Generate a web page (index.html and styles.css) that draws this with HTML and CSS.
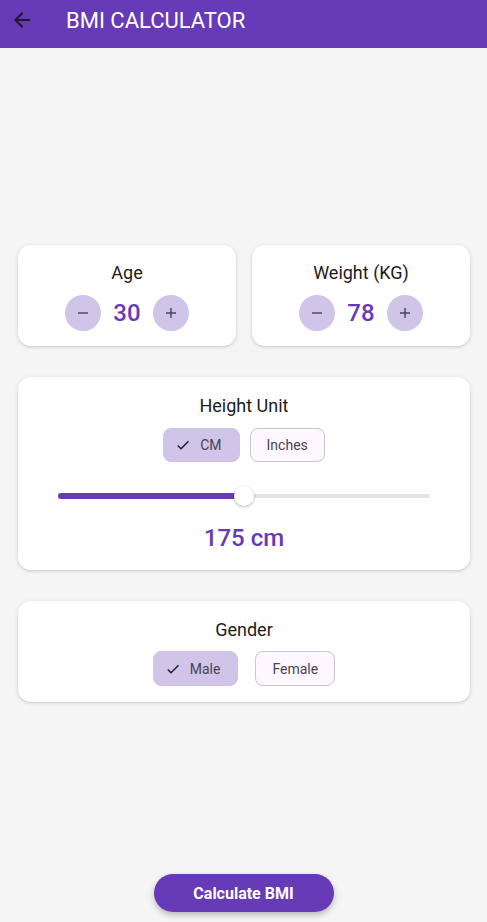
FILE: index.html
```html
<!DOCTYPE html>
<html>
<head>
<meta charset="utf-8">
<link rel="stylesheet" href="styles.css">
</head>
<body>
<div class="app">
  <header class="appbar">
    <svg class="back" width="24" height="24" viewBox="0 0 24 24"><path d="M20 11H7.83l5.59-5.59L12 4l-8 8 8 8 1.41-1.41L7.83 13H20v-2z" fill="#1d1b20"/></svg>
    <h1 class="title">BMI CALCULATOR</h1>
  </header>
  <main class="content">
    <div class="row">
      <section class="card small">
        <div class="label">Age</div>
        <div class="stepper">
          <button class="circle"><svg width="12" height="12" viewBox="0 0 12 12"><path d="M1 6h10" stroke="#4a4458" stroke-width="1.4"/></svg></button>
          <span class="num">30</span>
          <button class="circle"><svg width="12" height="12" viewBox="0 0 12 12"><path d="M1 6h10M6 1v10" stroke="#4a4458" stroke-width="1.4"/></svg></button>
        </div>
      </section>
      <section class="card small">
        <div class="label">Weight (KG)</div>
        <div class="stepper">
          <button class="circle"><svg width="12" height="12" viewBox="0 0 12 12"><path d="M1 6h10" stroke="#4a4458" stroke-width="1.4"/></svg></button>
          <span class="num">78</span>
          <button class="circle"><svg width="12" height="12" viewBox="0 0 12 12"><path d="M1 6h10M6 1v10" stroke="#4a4458" stroke-width="1.4"/></svg></button>
        </div>
      </section>
    </div>
    <section class="card height">
      <div class="label">Height Unit</div>
      <div class="chips">
        <span class="chip selected"><svg width="18" height="18" viewBox="0 0 24 24"><path d="M9 16.17 4.83 12l-1.42 1.41L9 19 21 7l-1.41-1.41z" fill="#1d1b20"/></svg>CM</span>
        <span class="chip">Inches</span>
      </div>
      <div class="slider">
        <div class="track"><div class="active" style="width:178px"></div></div>
        <div class="thumb" style="left:176px"></div>
      </div>
      <div class="big">175 cm</div>
    </section>
    <section class="card gender">
      <div class="label">Gender</div>
      <div class="chips wide">
        <span class="chip selected"><svg width="18" height="18" viewBox="0 0 24 24"><path d="M9 16.17 4.83 12l-1.42 1.41L9 19 21 7l-1.41-1.41z" fill="#1d1b20"/></svg>Male</span>
        <span class="chip">Female</span>
      </div>
    </section>
  </main>
  <div class="bottom">
    <button class="calc">Calculate BMI</button>
  </div>
</div>
</body>
</html>
```
FILE: styles.css
```css
* { box-sizing: border-box; }
html, body { margin: 0; padding: 0; }
body {
  font-family: Roboto, "Noto Sans", sans-serif;
  background: #f5f5f5;
  color: #1d1b20;
}
.app {
  width: 487px;
  height: 922px;
  display: flex;
  flex-direction: column;
}
.appbar {
  height: 48px;
  background: #673ab7;
  display: flex;
  align-items: center;
  padding: 0 0 8px 10px;
  flex: none;
}
.back { display: block; }
.title {
  margin: 0 0 0 32px;
  font-size: 22px;
  font-weight: 400;
  color: #ffffff;
  letter-spacing: 0;
}
.content {
  flex: 1;
  padding: 197px 17px 0 18px;
  display: flex;
  flex-direction: column;
  gap: 31px;
}
.row {
  display: flex;
  gap: 16px;
}
.card {
  background: #ffffff;
  border-radius: 13px;
  box-shadow: 0 1px 4px rgba(0,0,0,0.14), 0 1px 2px rgba(0,0,0,0.06);
  display: flex;
  flex-direction: column;
  align-items: center;
}
.card.small {
  flex: 1;
  height: 101px;
  padding-top: 16px;
}
.label {
  font-size: 18px;
  line-height: 24px;
  color: #1d1b20;
}
.stepper {
  margin-top: 10px;
  display: flex;
  align-items: center;
  gap: 12px;
}
.circle {
  width: 36px;
  height: 36px;
  border-radius: 50%;
  border: none;
  background: #d1c4e9;
  padding: 0;
  display: flex;
  align-items: center;
  justify-content: center;
}
.num {
  font-size: 24px;
  font-weight: 500;
  color: #673ab7;
  min-width: 28px;
  text-align: center;
  line-height: 36px;
}
.card.height {
  height: 193px;
  padding-top: 17px;
}
.chips {
  margin-top: 10px;
  display: flex;
  gap: 10px;
}
.chips.wide { gap: 17px; }
.chip {
  height: 34px;
  display: flex;
  align-items: center;
  gap: 8px;
  padding: 0 16px 0 16px;
  border-radius: 8px;
  border: 1px solid #cac4d0;
  background: #fef7ff;
  font-size: 14px;
  color: #49454f;
}
.chip svg { width: 16px; height: 16px; }
.chip.selected {
  background: #d1c4e9;
  border-color: #d1c4e9;
  padding: 0 17px 0 11px;
  gap: 9px;
}
.gender .chip { height: 35px; }
.slider {
  position: relative;
  width: 372px;
  height: 40px;
  margin-top: 14px;
}
.track {
  position: absolute;
  left: 0;
  right: 0;
  top: 18px;
  height: 4px;
  border-radius: 2px;
  background: #e6e0ec;
}
.active {
  position: absolute;
  left: 0;
  top: -1px;
  height: 6px;
  border-radius: 3px;
  background: #673ab7;
}
.thumb {
  position: absolute;
  top: 10px;
  width: 20px;
  height: 20px;
  border-radius: 50%;
  background: #ffffff;
  box-shadow: 0 1px 3px rgba(0,0,0,0.3);
}
.big {
  margin-top: 6px;
  font-size: 24px;
  line-height: 32px;
  font-weight: 500;
  color: #673ab7;
}
.card.gender {
  height: 101px;
  padding-top: 17px;
}
.gender .chips { margin-top: 9px; }
.bottom {
  flex: none;
  display: flex;
  justify-content: center;
  padding-bottom: 10px;
}
.calc {
  width: 180px;
  height: 38px;
  border: none;
  border-radius: 19px;
  background: #673ab7;
  color: #ffffff;
  font-family: Roboto, sans-serif;
  font-size: 16px;
  font-weight: 700;
  box-shadow: 0 3px 6px rgba(0,0,0,0.25);
}
```
